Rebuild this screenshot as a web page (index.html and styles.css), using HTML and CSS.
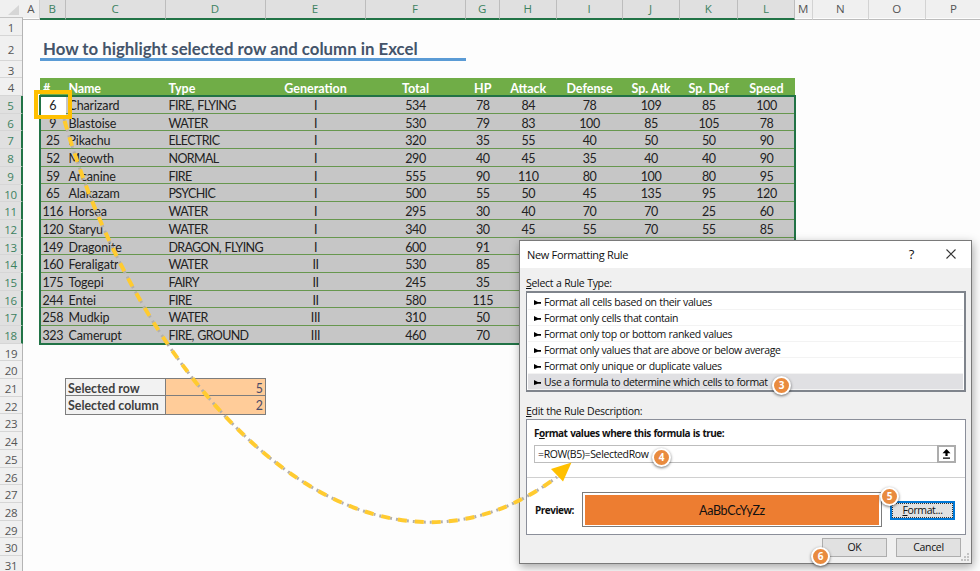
FILE: index.html
```html
<!DOCTYPE html>
<html lang="en">
<head>
    <meta charset="UTF-8">
    <meta name="viewport" content="width=device-width, initial-scale=1.0">
    <title>How to highlight selected row and column in Excel</title>
    <link rel="stylesheet" href="styles.css">
</head>
<body>
    <div class="sheet">
        <div class="corner"><svg width="12" height="11"><path d="M11 0V10H0Z" fill="#d6d6d6"/></svg></div>
        <div class="col-heads">
            <span>A</span><span class="on">B</span><span class="on">C</span><span class="on">D</span><span class="on">E</span><span class="on">F</span><span class="on">G</span><span class="on">H</span><span class="on">I</span><span class="on">J</span><span class="on">K</span><span class="on">L</span><span>M</span><span>N</span><span>O</span><span>P</span>
        </div>
        <div class="row-heads" id="rowHeads"></div>
        <div class="cells">
            <h1>How to highlight selected row and column in Excel</h1>
            <div class="table">
                <div class="row head"><span>#</span><span>Name</span><span>Type</span><span>Generation</span><span>Total</span><span>HP</span><span>Attack</span><span>Defense</span><span>Sp. Atk</span><span>Sp. Def</span><span>Speed</span></div>
                <div class="selection" id="rows"></div>
            </div>
            <div class="params">
                <span class="label">Selected row</span><span class="value">5</span>
                <span class="label">Selected column</span><span class="value">2</span>
            </div>
        </div>
    </div>

    <div class="active-cell"></div>

    <div class="dialog">
        <div class="titlebar">
            <span class="title">New Formatting Rule</span>
            <span class="help">?</span>
            <svg width="10" height="10" viewBox="0 0 10 10"><path d="M.5 .5L9.5 9.5M9.5 .5L.5 9.5" stroke="#333" stroke-width="1.1" fill="none"/></svg>
        </div>
        <div class="content">
            <div class="caption"><u>S</u>elect a Rule Type:</div>
            <ul class="rules">
                <li>Format all cells based on their values</li>
                <li>Format only cells that contain</li>
                <li>Format only top or bottom ranked values</li>
                <li>Format only values that are above or below average</li>
                <li>Format only unique or duplicate values</li>
                <li class="picked">Use a formula to determine which cells to format</li>
            </ul>
            <div class="caption second"><u>E</u>dit the Rule Description:</div>
            <div class="description">
                <div class="formula">
                    <div class="strong">F<u>o</u>rmat values where this formula is true:</div>
                    <div class="input">
                        <span>=ROW(B5)=SelectedRow</span>
                        <i class="picker"><svg width="9" height="10" viewBox="0 0 9 10"><path d="M4.5 0L8.5 4.3H5.6V7H3.4V4.3H.5ZM1 8.6H8V9.7H1Z" fill="#000"/></svg></i>
                    </div>
                </div>
                <div class="preview">
                    <span class="strong">Preview:</span>
                    <div class="sample"><span>AaBbCcYyZz</span></div>
                    <button class="btn format"><span><u>F</u>ormat...</span></button>
                </div>
            </div>
            <div class="buttons">
                <button class="btn">OK</button>
                <button class="btn">Cancel</button>
            </div>
        </div>
        <svg class="grip" width="8" height="8" viewBox="0 0 8 8"><path d="M6 0h2v2h-2zM3 3h2v2h-2zM6 3h2v2h-2zM0 6h2v2h-2zM3 6h2v2h-2zM6 6h2v2h-2z" fill="#c3c3c3"/></svg>
    </div>

    <svg class="arrow" width="980" height="571" viewBox="0 0 980 571">
        <path class="dots" d="M64 119C140 388 360 624 557 477"/>
        <path class="dashes" d="M64 119C140 388 360 624 557 477"/>
        <path d="M571.5 462.5L551 469L563 481.500Z" fill="#ffc000"/>
    </svg>

    <div class="step step3">3</div>
    <div class="step step4">4</div>
    <div class="step step5">5</div>
    <div class="step step6">6</div>

    <script src="script.js"></script>
</body>
</html>
```
FILE: styles.css
```css
* {
    box-sizing: border-box;
}
body {
    margin: 0;
    width: 980px;
    height: 571px;
    overflow: hidden;
    position: relative;
    background-color: #fdfdfd;
    font-family: "Open Sans", sans-serif;
}
.sheet {
    display: grid;
    grid-template-columns: 23px 959px;
    grid-template-rows: 18px auto;
}
.corner {
    background-color: #f0f0f0;
    border-bottom: 1px solid #c4c4c4;
    display: flex;
    justify-content: flex-end;
    padding: 5px 3px 0 0;
}
.col-heads {
    display: grid;
    grid-template-columns: 17px 25.5px 100px 100px 100px 100px 34.5px 56.5px 66px 57px 58.5px 57px 17.5px 56.5px 56.5px 57px;
    background-color: #f0f0f0;
}
.col-heads span {
    font-size: 11.500px;
    line-height: 18px;
    text-align: center;
    color: #555;
    border-right: 1px solid #d3d3d3;
    border-bottom: 1px solid #bcbcbc;
}
.col-heads .on {
    background-color: #e0e0e0;
    color: #3d8260;
    border-right-color: #bdbdbd;
    border-bottom: 2px solid #217346;
}
.row-heads {
    background-color: #f0f0f0;
    border-right: 1px solid #b4b4b4;
}
.row-heads div {
    height: 17.69px;
    line-height: 19.5px;
    font-size: 11.500px;
    letter-spacing: -0.3px;
    text-align: center;
    color: #555;
    border-bottom: 1px solid #d6d6d6;
}
.row-heads .tall {
    height: 25px;
    line-height: 27px;
}
.row-heads .on {
    background-color: #e0e0e0;
    color: #3d8260;
    border-right: 2px solid #217346;
    margin-right: -1px;
}
.cells {
    padding-left: 17px;
    font-family: "Lato", sans-serif;
}
h1 {
    width: 426px;
    height: 25px;
    margin: 18px 0 17px;
    padding-left: 3px;
    border-bottom: 3px solid #5b9bd5;
    font-size: 16.8px;
    line-height: 25px;
    color: #44546a;
    white-space: nowrap;
}
.table {
    width: 755px;
}
.row {
    display: grid;
    grid-template-columns: 25.5px 100px 100px 100px 100px 34.5px 56.5px 66px 57px 58.5px 57px;
    height: 17.69px;
    font-size: 12.500px;
    letter-spacing: -0.4px;
    line-height: 19.5px;
    color: #222;
    border-bottom: 1px solid #67974e;
}
.row span {
    text-align: center;
    white-space: nowrap;
}
.row span:nth-child(2), .row span:nth-child(3) {
    text-align: left;
    padding-left: 3px;
}
.row span:nth-child(2) {
    letter-spacing: -0.15px;
}
.selection .row span:nth-child(3) {
    letter-spacing: -0.65px;
    word-spacing: 1px;
}
.head {
    height: 18px;
    background-color: #70ad47;
    color: #fff;
    font-weight: bold;
    letter-spacing: 0;
    line-height: 21px;
    border-bottom: none;
}
.head span:first-child {
    text-align: left;
    padding-left: 3px;
}
.selection {
    background-color: #c6c6c6;
    outline: 2px solid #217346;
    outline-offset: -1px;
    height: 247.7px;
}
.selection .row:last-child {
    border-bottom: none;
}
.params {
    display: grid;
    grid-template-columns: 100px 99px;
    width: 201px;
    margin: 34px 0 0 25px;
    border: 1px solid #7d7d7d;
    font-size: 12.400px;
    line-height: 19.5px;
}
.params span {
    height: 17.500px;
}
.params .label {
    padding-left: 2px;
    font-weight: bold;
    color: #3f3f3f;
    background-color: #f2f2f2;
    border-right: 1px solid #7d7d7d;
}
.params .value {
    padding-right: 2px;
    text-align: right;
    color: #4b4b68;
    background-color: #ffcc99;
}
.params span:nth-child(-n+2) {
    border-bottom: 1px solid #7d7d7d;
}
.active-cell {
    position: absolute;
    left: 34px;
    top: 90px;
    width: 38px;
    height: 29px;
    border: 4px solid #ffc000;
}
#rows .row:first-child span:first-child {
    background-color: #fff;
}
.dialog {
    position: absolute;
    left: 519px;
    top: 240px;
    width: 453px;
    height: 324px;
    border: 1px solid #7a7a7a;
    background-color: #f0f0f0;
    box-shadow: 1px 3px 9px rgba(0, 0, 0, 0.35);
    font-size: 10.500px;
    letter-spacing: -0.38px;
    word-spacing: 0.3px;
    color: #111;
}
.titlebar {
    display: flex;
    align-items: center;
    height: 27px;
    padding: 0 15px 1px 7px;
    background-color: #fff;
}
.title {
    flex: 1;
    font-size: 11px;
}
.help {
    font-size: 13px;
    margin-right: 32px;
}
.content {
    padding: 8px 5px 0 6px;
}
.caption {
    height: 15px;
    line-height: 15px;
    letter-spacing: -0.3px;
}
.second {
    margin-top: 12px;
}
.rules {
    height: 101px;
    margin: 0;
    padding: 1px 1px;
    list-style: none;
    border: 2px solid #7f848c;
    border-left-width: 1px;
    background-color: #fff;
}
.rules li {
    height: 16px;
    line-height: 16px;
    padding-left: 16px;
    border-bottom: 1px solid #f3f3f3;
    position: relative;
    white-space: nowrap;
}
.rules li::before {
    content: "";
    position: absolute;
    left: 6px;
    top: 6px;
    width: 7px;
    height: 5px;
    background-color: #000;
    clip-path: polygon(0 0, 55% 40%, 100% 40%, 100% 75%, 55% 75%, 0 100%);
}
.rules .picked {
    background-color: #e0e0e3;
}
.description {
    height: 116px;
    border: 1px solid #8b8f9a;
    background-color: #fff;
}
.strong {
    font-weight: bold;
    font-size: 10px;
    letter-spacing: -0.5px;
    word-spacing: 0.6px;
}
.formula {
    height: 58px;
    padding: 6px 9px 0 7px;
    border-bottom: 1px solid #d0d0d0;
}
.formula .strong {
    line-height: 15px;
    height: 19px;
}
.input {
    display: flex;
    justify-content: space-between;
    height: 18px;
    padding-left: 3px;
    border: 1px solid #bdbdbd;
    line-height: 17px;
    letter-spacing: -0.35px;
}
.picker {
    display: flex;
    align-items: center;
    justify-content: center;
    width: 19px;
    height: 18px;
    margin: -1px;
    border: 2px solid #adadad;
    background-color: #fff;
}
.preview {
    display: flex;
    align-items: center;
    height: 56px;
    padding: 8px 10px 0 8px;
}
.preview .strong {
    width: 47px;
}
.sample {
    width: 300px;
    height: 35px;
    margin-top: -1px;
    padding: 2px;
    border: 1px solid #7c7c7c;
    background-color: #fff;
}
.sample span {
    display: block;
    height: 30px;
    background-color: #ed7d31;
    font-family: "Lato", sans-serif;
    font-size: 12.500px;
    letter-spacing: -0.3px;
    line-height: 31px;
    text-align: center;
}
.btn {
    width: 65px;
    height: 19px;
    padding: 0;
    border: 1px solid #adadad;
    background-color: #e1e1e1;
    font-family: "Open Sans", sans-serif;
    font-size: 10.500px;
    letter-spacing: -0.3px;
    line-height: 17px;
    color: #111;
}
.format {
    margin-left: 8px;
    border: 2px solid #0078d7;
    letter-spacing: -0.4px;
}
.format span {
    display: block;
    height: 15px;
    line-height: 13px;
    border: 1px dotted #333;
}
.buttons {
    display: flex;
    justify-content: flex-end;
    gap: 9px;
    padding: 3px 5px 0 0;
}
.grip {
    position: absolute;
    right: 2px;
    bottom: 2px;
}
.arrow {
    position: absolute;
    left: 0;
    top: 0;
}
.arrow .dots {
    fill: none;
    stroke: #b5b0a8;
    stroke-width: 3;
    stroke-dasharray: 2 9 2 4;
}
.arrow .dashes {
    fill: none;
    stroke: #ffcb30;
    stroke-width: 4;
    stroke-dasharray: 0 2 9 6;
}
.step {
    position: absolute;
    width: 19px;
    height: 19px;
    border: 2px solid #fff;
    border-radius: 50%;
    background-color: #e98b3f;
    box-shadow: 0 1px 3px rgba(0, 0, 0, 0.55);
    color: #fff;
    font-size: 10px;
    font-weight: bold;
    line-height: 15px;
    text-align: center;
}
.step3 {
    left: 772px;
    top: 376px;
}
.step4 {
    left: 652px;
    top: 448px;
}
.step5 {
    left: 880px;
    top: 487px;
}
.step6 {
    left: 811px;
    top: 547px;
}
```
FILE: script.js
```js
const pokemon = [
    [6, 'Charizard', 'FIRE, FLYING', 'I', 534, 78, 84, 78, 109, 85, 100],
    [9, 'Blastoise', 'WATER', 'I', 530, 79, 83, 100, 85, 105, 78],
    [25, 'Pikachu', 'ELECTRIC', 'I', 320, 35, 55, 40, 50, 50, 90],
    [52, 'Meowth', 'NORMAL', 'I', 290, 40, 45, 35, 40, 40, 90],
    [59, 'Arcanine', 'FIRE', 'I', 555, 90, 110, 80, 100, 80, 95],
    [65, 'Alakazam', 'PSYCHIC', 'I', 500, 55, 50, 45, 135, 95, 120],
    [116, 'Horsea', 'WATER', 'I', 295, 30, 40, 70, 70, 25, 60],
    [120, 'Staryu', 'WATER', 'I', 340, 30, 45, 55, 70, 55, 85],
    [149, 'Dragonite', 'DRAGON, FLYING', 'I', 600, 91],
    [160, 'Feraligatr', 'WATER', 'II', 530, 85],
    [175, 'Togepi', 'FAIRY', 'II', 245, 35],
    [244, 'Entei', 'FIRE', 'II', 580, 115],
    [258, 'Mudkip', 'WATER', 'III', 310, 50],
    [323, 'Camerupt', 'FIRE, GROUND', 'III', 460, 70]
];

document.getElementById('rows').innerHTML = pokemon.map(function(p) {
    return '<div class="row"><span>' + p.join('</span><span>') + '</span></div>';
}).join('');

let heads = '';
for (let i = 1; i <= 31; i++) {
    let cls = i === 2 ? 'tall' : (i >= 5 && i <= 18 ? 'on' : '');
    heads += '<div class="' + cls + '">' + i + '</div>';
}
document.getElementById('rowHeads').innerHTML = heads;
```
